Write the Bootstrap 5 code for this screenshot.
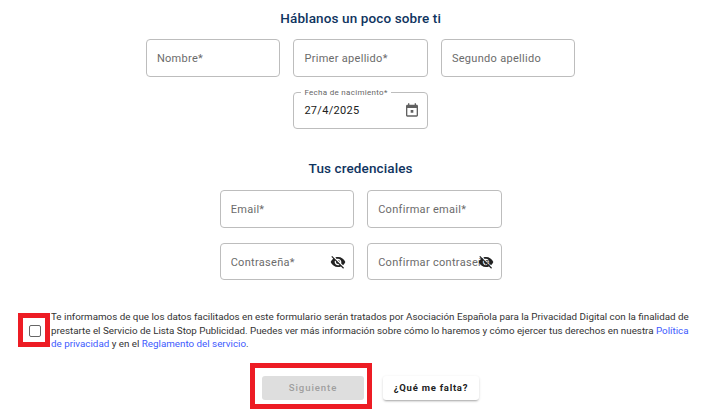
<!DOCTYPE html>
<html lang="es">
<head>
<meta charset="utf-8">
<title>Formulario</title>
<link href="https://cdn.jsdelivr.net/npm/bootstrap@5.3.0/dist/css/bootstrap.min.css" rel="stylesheet">
<style>
html,body{height:413px;overflow:hidden}
body{font-family:Roboto,"Liberation Sans",sans-serif;background:#fff;color:#212121;padding:10px 0 0 1.3px}
.sec-title{font-size:13.5px;font-weight:500;line-height:17px;color:#0f3460;letter-spacing:.12px;margin:0 0 12px;text-align:center}
.sec-title-2{margin:31px 0 13px}
.field-row{gap:13px;margin-bottom:15.2px}
.field-row-tight{margin-top:-.6px}
.field-box{position:relative;width:134.5px;height:37.6px;border:1px solid #bdbdbd;border-radius:4px;display:flex;align-items:center;padding:3px 10px 0;font-size:11px;letter-spacing:.3px;color:#6b6b6b;white-space:nowrap;background:#fff}
.field-label{overflow:hidden;flex:1 1 auto;min-width:0}
.float-label{position:absolute;left:7px;top:-6px;background:#fff;padding:0 3px;font-size:8px;line-height:11px;letter-spacing:.3px;color:#666}
.date-val{color:#212121;flex:1 1 auto;margin-top:-2px}
.trail-icon{position:absolute;top:10px;right:7px;width:16px;height:16px}
.trail-cal{top:9px}
.consent-row{margin-top:30px;margin-left:-1.3px;padding-left:18px;padding-right:31px}
.check-frame{flex:0 0 32px;width:32px;height:34px;border:5px solid #ed1c24;display:flex;align-items:center;justify-content:center;margin-top:3px}
.check-box{width:12px;height:12px;border:1.5px solid #666;border-radius:2px;display:block;margin:2px 0 0 2px}
.consent-text{font-size:9.8px;line-height:13.4px;color:#333;margin:0 0 0 1px}
.consent-text a{color:#3d5afe;text-decoration:none}
.action-row{margin-top:13px;margin-left:-1.3px;padding-left:250px}
.btn-frame{width:122px;height:46px;border:5px solid #ed1c24;padding:8px 3px 0 7px;flex:0 0 122px}
.next-btn.btn:disabled{display:block;width:102px;height:24px;border:0;border-radius:3px;background:#dedede;color:#9e9e9e;font-size:9.6px;font-weight:500;letter-spacing:.9px;padding:0;line-height:24px;opacity:1}
.missing-btn.btn{margin:13px 0 0 11px;width:96px;height:24px;border:0;border-radius:3px;background:#fff;color:#212121;font-size:9.5px;font-weight:700;letter-spacing:.75px;padding:0;line-height:24px;box-shadow:0 2px 2px -1px rgba(0,0,0,.25),0 1px 3px 0 rgba(0,0,0,.14)}
</style>
</head>
<body>
<h2 class="sec-title">Háblanos un poco sobre ti</h2>
<div class="d-flex justify-content-center field-row">
  <div class="field-box"><span class="field-label">Nombre*</span></div>
  <div class="field-box"><span class="field-label">Primer apellido*</span></div>
  <div class="field-box"><span class="field-label">Segundo apellido</span></div>
</div>
<div class="d-flex justify-content-center">
  <div class="field-box">
    <span class="float-label">Fecha de nacimiento*</span>
    <span class="date-val">27/4/2025</span>
    <svg class="trail-icon trail-cal" viewBox="0 0 24 24" fill="#616161"><path d="M19 4h-1V2h-2v2H8V2H6v2H5c-1.100 0-2 .9-2 2v14c0 1.100.9 2 2 2h14c1.100 0 2-.9 2-2V6c0-1.100-.9-2-2-2zm0 16H5V9h14v11zM10 12h4v4h-4z"/></svg>
  </div>
</div>
<h2 class="sec-title sec-title-2">Tus credenciales</h2>
<div class="d-flex justify-content-center field-row">
  <div class="field-box"><span class="field-label">Email*</span></div>
  <div class="field-box"><span class="field-label">Confirmar email*</span></div>
</div>
<div class="d-flex justify-content-center field-row field-row-tight mb-0">
  <div class="field-box"><span class="field-label">Contraseña*</span>
    <svg class="trail-icon" viewBox="0 0 24 24" fill="#212121"><path d="M12 7c2.760 0 5 2.240 5 5 0 .65-.13 1.260-.36 1.830l2.920 2.920c1.510-1.260 2.700-2.890 3.430-4.750-1.730-4.390-6-7.500-11-7.500-1.400 0-2.740.25-3.980.7l2.160 2.160C10.740 7.130 11.350 7 12 7zM2 4.270l2.280 2.280.46.46C3.080 8.300 1.780 10.020 1 12c1.730 4.390 6 7.500 11 7.500 1.550 0 3.030-.3 4.380-.84l.42.42L19.730 22 21 20.730 3.270 3 2 4.270zM7.530 9.800l1.550 1.550c-.05.21-.08.430-.08.650 0 1.660 1.340 3 3 3 .22 0 .44-.03.65-.08l1.550 1.550c-.67.33-1.410.530-2.200.530-2.760 0-5-2.240-5-5 0-.79.2-1.530.53-2.200zm4.310-.78l3.150 3.150.02-.16c0-1.660-1.340-3-3-3l-.17.010z"/></svg>
  </div>
  <div class="field-box"><span class="field-label">Confirmar contraseña*</span>
    <svg class="trail-icon" viewBox="0 0 24 24" fill="#212121"><path d="M12 7c2.760 0 5 2.240 5 5 0 .65-.13 1.260-.36 1.830l2.920 2.920c1.510-1.260 2.700-2.890 3.430-4.750-1.730-4.390-6-7.500-11-7.500-1.400 0-2.740.25-3.980.7l2.160 2.160C10.740 7.130 11.350 7 12 7zM2 4.270l2.280 2.280.46.46C3.080 8.300 1.780 10.020 1 12c1.730 4.390 6 7.500 11 7.500 1.550 0 3.030-.3 4.380-.84l.42.42L19.730 22 21 20.730 3.270 3 2 4.270zM7.530 9.800l1.550 1.550c-.05.21-.08.430-.08.650 0 1.660 1.340 3 3 3 .22 0 .44-.03.65-.08l1.550 1.550c-.67.33-1.410.530-2.200.530-2.760 0-5-2.240-5-5 0-.79.2-1.530.53-2.200zm4.310-.78l3.150 3.150.02-.16c0-1.660-1.340-3-3-3l-.17.010z"/></svg>
  </div>
</div>
<div class="d-flex align-items-start consent-row">
  <div class="check-frame"><span class="check-box"></span></div>
  <p class="consent-text">Te informamos de que los datos facilitados en este formulario serán tratados por Asociación Española para la Privacidad Digital con la finalidad de prestarte el Servicio de Lista Stop Publicidad. Puedes ver más información sobre cómo lo haremos y cómo ejercer tus derechos en nuestra <a href="#">Política de privacidad</a> y en el <a href="#">Reglamento del servicio</a>.</p>
</div>
<div class="d-flex align-items-start action-row">
  <div class="btn-frame"><button type="button" class="next-btn btn" disabled>Siguiente</button></div>
  <button type="button" class="missing-btn btn">¿Qué me falta?</button>
</div>
<script src="https://cdn.jsdelivr.net/npm/bootstrap@5.3.0/dist/js/bootstrap.bundle.min.js"></script>
</body>
</html>
